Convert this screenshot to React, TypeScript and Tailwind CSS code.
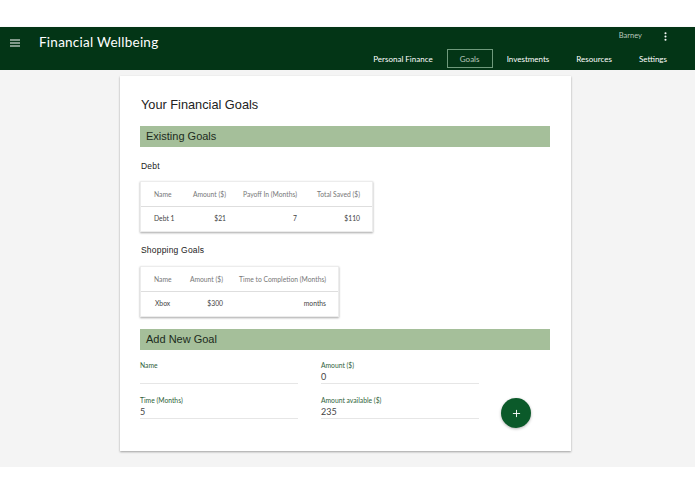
import { MoreVertical, Plus } from "lucide-react";

const raleway = "font-['Lato','Noto_Sans',sans-serif]";

const tabs = ["Personal Finance", "Goals", "Investments", "Resources", "Settings"];

function SectionBar({ title }: { title: string }) {
  return (
    <div className="flex h-[21px] items-center bg-[#a5bf9a] pl-[6px] text-[11px] text-[#1c2b1c]">
      {title}
    </div>
  );
}

function GoalTable({
  width,
  cols,
  head,
  row,
  nudge = "",
}: {
  width: string;
  cols: string;
  head: string[];
  row: string[];
  nudge?: string;
}) {
  return (
    <div className={`${width} ${raleway} border border-[#ececec] bg-white text-[6.75px] shadow-[0_1px_2px_rgba(0,0,0,0.35)]`}>
      <div className={`grid h-[25px] ${cols} items-center border-b border-[#dedede] pl-[13px] pr-[12px] pt-[1px] text-[#777]`}>
        {head.map((h, i) => (
          <span key={h} className={i === 0 ? "whitespace-nowrap" : "whitespace-nowrap text-right"}>
            {h}
          </span>
        ))}
      </div>
      <div className={`grid h-[24px] ${cols} items-center pb-[2px] pl-[13px] pr-[12px] text-[#444]`}>
        {row.map((c, i) => (
          <span key={i} className={i === 0 ? nudge : "text-right"}>
            {c}
          </span>
        ))}
      </div>
    </div>
  );
}

function Field({ label, value }: { label: string; value?: string }) {
  return (
    <div className={`${raleway} flex h-[24px] w-[158px] flex-col border-b border-[#e6e6e6]`}>
      <span className="text-[6.75px] leading-[10px] text-[#2f5f3a]">{label}</span>
      <span className="mt-[1px] text-[9px] leading-[12px] text-[#444]">{value}</span>
    </div>
  );
}

export default function App() {
  return (
    <div className="h-[494px] w-[695px] overflow-hidden bg-white pt-[27px] font-['Liberation_Sans',sans-serif]">
      <header className={`${raleway} h-[43px] bg-[#033516] text-white shadow-[0_1px_2px_rgba(0,0,0,0.3)]`}>
        <div className="flex h-full">
          <div className="flex pl-[10px] pt-[8px]">
            <svg className="mt-[4px] h-[8px] w-[10px]" viewBox="0 0 10 8" fill="none" stroke="currentColor" strokeWidth="1.2">
              <path d="M0 1h10M0 4h10M0 7h10" />
            </svg>
            <span className="ml-[19px] text-[13.5px] leading-[14px] tracking-[0.25px]">Financial Wellbeing</span>
          </div>
          <div className="ml-auto flex flex-col items-end pr-[28px]">
            <div className="flex h-[22px] items-center pb-[4px] text-[7.5px] text-[#b9c8bc]">
              Barney
              <MoreVertical className="ml-[18px] mr-[-4px] h-[11px] w-[11px] text-white" strokeWidth={2.5} />
            </div>
            <nav className="flex items-center text-[8px]">
              {tabs.map((t) =>
                t === "Goals" ? (
                  <span
                    key={t}
                    className="ml-[14px] flex h-[19px] w-[46px] items-center justify-center border border-[#6f9a7c] text-[#b9c8bc]"
                  >
                    {t}
                  </span>
                ) : (
                  <span key={t} className="ml-[27px] first:ml-0 [&:nth-child(3)]:ml-[14px]">
                    {t}
                  </span>
                ),
              )}
            </nav>
          </div>
        </div>
      </header>

      <main className="flex h-[397px] bg-[#f4f4f4] pl-[120px] pt-[6px]">
        <section className="h-[375px] w-[451px] bg-white pl-[20px] pr-[21px] pt-[22px] shadow-[0_1px_2px_rgba(0,0,0,0.35)]">
          <h1 className="pl-[1px] text-[12.75px] leading-[14px] text-[#222]">Your Financial Goals</h1>
          <div className="mt-[14px]">
            <SectionBar title="Existing Goals" />
          </div>
          <h2 className="mt-[14px] pl-[1px] text-[8.5px] leading-[10px] tracking-[0.2px] text-[#222]">Debt</h2>
          <div className="mt-[10px]">
            <GoalTable
              width="w-[233px]"
              cols="grid-cols-[34px_38px_71px_1fr]"
              head={["Name", "Amount ($)", "Payoff In (Months)", "Total Saved ($)"]}
              row={["Debt 1", "$21", "7", "$110"]}
            />
          </div>
          <h2 className="mt-[13px] pl-[1px] text-[8.5px] leading-[10px] tracking-[0.2px] text-[#222]">Shopping Goals</h2>
          <div className="mt-[11px]">
            <GoalTable
              width="w-[199px]"
              cols="grid-cols-[33px_36px_1fr]"
              head={["Name", "Amount ($)", "Time to Completion (Months)"]}
              row={["Xbox", "$300", "months"]}
              nudge="pl-[1px]"
            />
          </div>
          <div className="mt-[12px]">
            <SectionBar title="Add New Goal" />
          </div>
          <div className="relative mt-[10px] grid w-[339px] grid-cols-[158px_158px] gap-x-[23px] gap-y-[11px]">
            <Field label="Name" />
            <Field label="Amount ($)" value="0" />
            <Field label="Time (Months)" value="5" />
            <Field label="Amount available ($)" value="235" />
            <button className="absolute left-[361px] top-[38px] flex h-[30px] w-[30px] items-center justify-center rounded-full bg-[#0b5a2a] text-white shadow-[0_1px_3px_rgba(0,0,0,0.3)]">
              <Plus className="h-[11px] w-[11px]" strokeWidth={2} />
            </button>
          </div>
        </section>
      </main>
    </div>
  );
}
